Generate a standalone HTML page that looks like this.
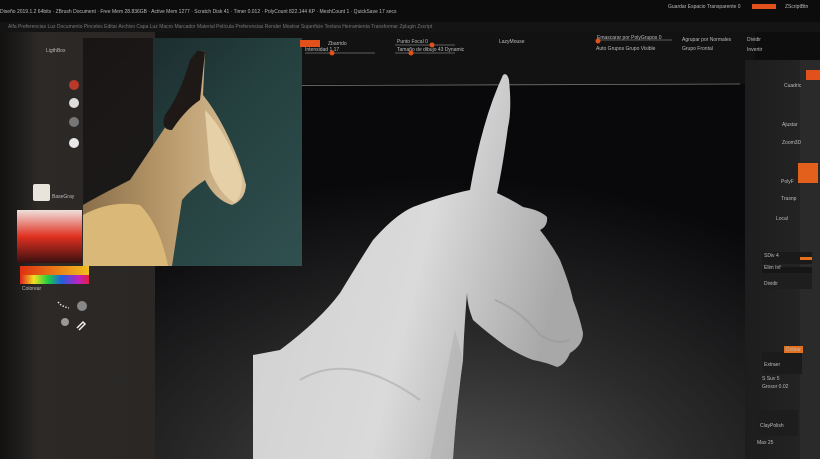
<!DOCTYPE html>
<html><head><meta charset="utf-8"><style>
body{margin:0;width:820px;height:459px;overflow:hidden;background:#111;font-family:"Liberation Sans",sans-serif;}
.t{position:absolute;color:#bbb;font-size:5px;white-space:nowrap;line-height:6px}
</style></head><body>
<svg width="820" height="459" style="position:absolute;left:0;top:0">
<defs>
<radialGradient id="vp" cx="0.5" cy="1.1" r="0.85">
<stop offset="0" stop-color="#555556"/><stop offset="0.5" stop-color="#2a2a2b"/><stop offset="1" stop-color="#09090b"/></radialGradient>
<linearGradient id="lp" x1="0" y1="0" x2="1" y2="0"><stop offset="0" stop-color="#121110"/><stop offset="0.25" stop-color="#2c2927"/><stop offset="1" stop-color="#2a2725"/></linearGradient>
<linearGradient id="rp" x1="0" y1="0" x2="1" y2="0"><stop offset="0" stop-color="#1e1d1d"/><stop offset="1" stop-color="#262525"/></linearGradient>
<linearGradient id="hs" x1="0" y1="0" x2="1" y2="0.3"><stop offset="0" stop-color="#cfcfcf"/><stop offset="0.6" stop-color="#dadada"/><stop offset="1" stop-color="#a8a8a8"/></linearGradient>
<linearGradient id="ph" x1="0" y1="0" x2="1" y2="1"><stop offset="0" stop-color="#1a2527"/><stop offset="0.5" stop-color="#24403f"/><stop offset="1" stop-color="#30504f"/></linearGradient>
<linearGradient id="hb" x1="0" y1="0" x2="1" y2="0"><stop offset="0" stop-color="#8a6f4a"/><stop offset="0.5" stop-color="#b8986a"/><stop offset="1" stop-color="#d8c098"/></linearGradient>
<linearGradient id="cp" x1="0" y1="0" x2="0" y2="1"><stop offset="0" stop-color="#f0e0dc"/><stop offset="0.5" stop-color="#e03020"/><stop offset="1" stop-color="#3a1010"/></linearGradient>
<linearGradient id="rb" x1="0" y1="0" x2="1" y2="0"><stop offset="0" stop-color="#e02020"/><stop offset="0.2" stop-color="#f0e020"/><stop offset="0.4" stop-color="#20d040"/><stop offset="0.6" stop-color="#2060e0"/><stop offset="0.85" stop-color="#c020c0"/><stop offset="1" stop-color="#e02040"/></linearGradient>
<linearGradient id="ob" x1="0" y1="0" x2="1" y2="0"><stop offset="0" stop-color="#e03010"/><stop offset="1" stop-color="#f0c020"/></linearGradient>
</defs>
<rect x="0" y="0" width="820" height="459" fill="#0e0d0d"/>
<rect x="0" y="0" width="820" height="22" fill="#0c0c0c"/>
<rect x="0" y="22" width="820" height="10" fill="#141414"/>
<rect x="0" y="32" width="155" height="427" fill="url(#lp)"/>
<rect x="155" y="32" width="600" height="52" fill="#121212"/>
<rect x="155" y="84" width="595" height="375" fill="url(#vp)"/>
<line x1="160" y1="86" x2="740" y2="84" stroke="#777" stroke-width="0.8"/>
<rect x="745" y="60" width="75" height="399" fill="url(#rp)"/>
<rect x="800" y="60" width="20" height="399" fill="#2b2a2a"/>
<rect x="83" y="38" width="219" height="228" fill="url(#ph)"/>
<rect x="83" y="38" width="70" height="228" fill="#1a1210" opacity="0.8"/>
<path d="M83 266 L83 205 Q100 195 130 180 Q150 150 170 120 Q180 100 190 85 L198 50 L205 52 L203 95 Q215 110 225 130 Q240 160 246 185 Q245 200 232 205 Q215 200 205 180 Q190 190 182 200 L172 266 Z" fill="url(#hb)"/>
<path d="M83 266 L83 215 Q110 200 140 205 Q160 225 168 266 Z" fill="#d9b878"/>
<path d="M205 110 Q225 130 240 170 Q246 190 235 203 Q220 195 210 170 Z" fill="#e6d0a8"/>
<path d="M190 60 L198 50 L205 52 L200 100 Q185 110 172 130 Q160 130 165 115 Q180 95 190 60Z" fill="#1e1816"/>
<path d="M253 459 L253 355 L280 350 Q320 320 340 293 Q360 260 373 240 Q395 215 413 207 Q445 195 470 190 Q482 120 503 75 Q507 72 509 80 Q512 110 508 127 Q503 165 497 193 Q512 200 523 207 Q540 210 547 217 Q548 226 540 230 Q552 245 560 260 Q570 285 573 300 Q580 318 583 333 Q583 345 570 353 Q565 365 557 367 Q545 362 533 360 Q520 355 507 347 Q490 335 473 320 Q467 305 467 293 Q464 330 463 360 Q456 410 453 459 Z" fill="url(#hs)"/>
<path d="M300 380 Q350 350 420 400" stroke="#aaa" stroke-width="2" fill="none" opacity="0.6"/>
<path d="M495 300 Q520 310 540 335 Q555 345 570 340" stroke="#999" stroke-width="2" fill="none" opacity="0.6"/>
<path d="M430 459 Q445 380 455 330 L463 360 Q456 410 453 459Z" fill="#b0b0b0" opacity="0.6"/>
<circle cx="74" cy="85" r="5" fill="#b8392a"/>
<circle cx="74" cy="103" r="5" fill="#ddd"/>
<circle cx="74" cy="122" r="5" fill="#777"/>
<circle cx="74" cy="143" r="5" fill="#e8e8e8"/>
<rect x="33" y="184" width="17" height="17" fill="#e8e4dc" rx="2"/>
<rect x="17" y="210" width="65" height="53" fill="url(#cp)"/>
<rect x="20" y="266" width="69" height="9" fill="url(#ob)"/>
<rect x="20" y="275" width="69" height="9" fill="url(#rb)"/>
<circle cx="82" cy="306" r="5" fill="#888"/>
<circle cx="65" cy="322" r="4" fill="#999"/>
<path d="M58 302 l3 3 l4 2 l4 1" stroke="#ddd" stroke-width="1.5" stroke-dasharray="1.5 1.5" fill="none"/>
<path d="M77 328 l6 -6 l2 2 l-6 6" stroke="#eee" stroke-width="1.5" fill="none"/>
<rect x="798" y="163" width="20" height="20" fill="#e2601c"/>
<rect x="806" y="70" width="14" height="10" fill="#e2501c"/>
<rect x="762" y="252" width="50" height="12" fill="#1a1a1a"/>
<rect x="762" y="267" width="50" height="12" fill="#161616"/>
<rect x="762" y="273" width="50" height="16" fill="#1e1e1e"/>
<rect x="762" y="352" width="40" height="22" fill="#1b1b1b"/>
<rect x="758" y="410" width="40" height="26" fill="#1d1d1d"/>
<rect x="784" y="346" width="19" height="7" fill="#e2701c"/>
<rect x="800" y="257" width="12" height="3" fill="#e2701c"/>
<rect x="300" y="40" width="20" height="7" fill="#e2501c"/>
<rect x="752" y="4" width="24" height="5" fill="#e2501c"/>
<line x1="305" y1="53" x2="375" y2="53" stroke="#777" stroke-width="0.7"/>
<circle cx="332" cy="53" r="2.5" fill="#e2501c"/>
<line x1="395" y1="45" x2="455" y2="45" stroke="#777" stroke-width="0.7"/>
<circle cx="432" cy="45" r="2.5" fill="#e2501c"/>
<line x1="395" y1="53" x2="455" y2="53" stroke="#777" stroke-width="0.7"/>
<circle cx="411" cy="53" r="2.5" fill="#e2501c"/>
<line x1="597" y1="40" x2="672" y2="40" stroke="#777" stroke-width="0.7"/>
<circle cx="598" cy="41" r="2.5" fill="#e2501c"/>
</svg>
<div class="t" style="left:0px;top:9px">Diseño 2019.1.2 64bits · ZBrush Document · Free Mem 28.836GB · Active Mem 1277 · Scratch Disk 41 · Timer 0.012 · PolyCount 822.144 KP · MeshCount 1 · QuickSave 17 secs</div>
<div class="t" style="left:8px;top:24px;color:#777">Alfa Preferencias Luz Documento Pinceles Editar Archivo Capa Luz Macro Marcador Material Película Preferencias Render Mostrar Superficie Textura Herramienta Transformar Zplugin Zscript</div>
<div class="t" style="left:668px;top:4px">Guardar Espacio  Transparente 0</div>
<div class="t" style="left:785px;top:4px">ZScriptBtn</div>
<div class="t" style="left:46px;top:48px">LigthBox</div>
<div class="t" style="left:52px;top:194px">BaseGray</div>
<div class="t" style="left:22px;top:286px">Colorear</div>
<div class="t" style="left:328px;top:41px">Zbarrido</div>
<div class="t" style="left:305px;top:47px">Intensidad 1.17</div>
<div class="t" style="left:397px;top:39px">Punto Focal 0</div>
<div class="t" style="left:397px;top:47px">Tamaño de dibujo 43  Dynamic</div>
<div class="t" style="left:499px;top:39px">LazyMouse</div>
<div class="t" style="left:597px;top:35px">Emascarar por PolyGrupos 0</div>
<div class="t" style="left:596px;top:46px">Auto Grupos  Grupo Visible</div>
<div class="t" style="left:682px;top:37px">Agrupar por Normales</div>
<div class="t" style="left:682px;top:46px">Grupo Frontal</div>
<div class="t" style="left:747px;top:37px">Dividir</div>
<div class="t" style="left:747px;top:47px">Invertir</div>
<div class="t" style="left:784px;top:83px">Cuadric</div>
<div class="t" style="left:782px;top:122px">Ajustar</div>
<div class="t" style="left:782px;top:140px">Zoom3D</div>
<div class="t" style="left:781px;top:179px">PolyF</div>
<div class="t" style="left:781px;top:196px">Trasnp</div>
<div class="t" style="left:776px;top:216px">Local</div>
<div class="t" style="left:764px;top:253px">SDiv 4</div>
<div class="t" style="left:764px;top:265px">Elim Inf</div>
<div class="t" style="left:764px;top:281px">Dividir</div>
<div class="t" style="left:786px;top:347px">Doblar</div>
<div class="t" style="left:764px;top:362px">Extraer</div>
<div class="t" style="left:762px;top:376px">S Suv 5</div>
<div class="t" style="left:762px;top:384px">Grosor 0.02</div>
<div class="t" style="left:760px;top:423px">ClayPolish</div>
<div class="t" style="left:757px;top:440px">Max 25</div>
</body></html>
